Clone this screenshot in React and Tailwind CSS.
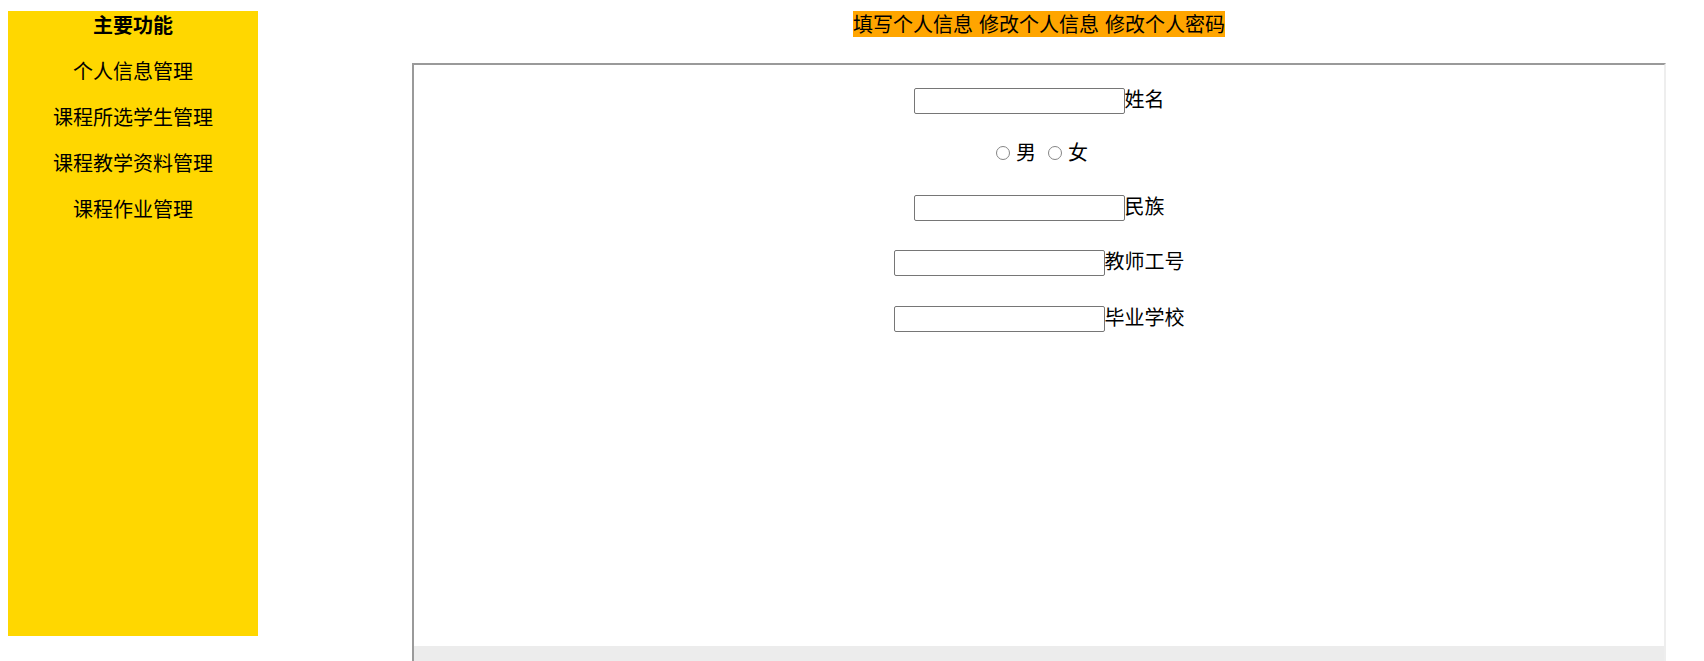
import React from 'react';

const menuItems = ['个人信息管理', '课程所选学生管理', '课程教学资料管理', '课程作业管理'];

const navItems = ['填写个人信息', '修改个人信息', '修改个人密码'];

const TextField = ({ label }) => (
  <div className="flex h-[26px] items-center">
    <input
      type="text"
      className="h-[26px] w-[211px] rounded-[2px] border border-[#767676] bg-white outline-none"
    />
    <span className="relative top-[-2px] text-[20px] leading-[26px] text-black">{label}</span>
  </div>
);

const Radio = () => (
  <span className="inline-block h-[14px] w-[14px] shrink-0 rounded-full border-[1.5px] border-[#858585] bg-white" />
);

const App = () => {
  return (
    <div className="flex h-[661px] items-start overflow-hidden bg-white font-['Noto_Sans_CJK_SC','Noto_Sans',sans-serif] text-black">
      {/* left menu */}
      <div className="ml-[8px] mt-[11px] h-[625px] w-[250px] shrink-0 bg-[#FFD700] pt-[1px] text-center">
        <div className="text-[20px] font-bold leading-[26px]">主要功能</div>
        {menuItems.map((item) => (
          <div key={item} className="mt-[20px] text-[20px] leading-[26px]">
            {item}
          </div>
        ))}
      </div>

      {/* right side */}
      <div className="ml-[154px] flex w-[1254px] shrink-0 flex-col items-center pt-[11px]">
        <div className="inline-flex h-[26px] gap-[6px] bg-[#FFA500] text-[20px] leading-[26px]">
          {navItems.map((item) => (
            <span key={item}>{item}</span>
          ))}
        </div>

        <div className="mt-[26px] flex h-[640px] w-full flex-col border-2 border-t-[#9a9a9a] border-l-[#9a9a9a] border-r-[#eeeeee] border-b-[#eeeeee]">
          <div className="flex h-[581px] shrink-0 flex-col items-center pt-[23px]">
            <TextField label="姓名" />

            <div className="mt-[26px] flex h-[26px] items-center pl-[6px] text-[20px] leading-[26px]">
              <Radio />
              <span className="relative top-[-1px] ml-[6px]">男</span>
              <span className="ml-[12px] flex items-center">
                <Radio />
              </span>
              <span className="relative top-[-1px] ml-[6px]">女</span>
            </div>

            <div className="mt-[29px]">
              <TextField label="民族" />
            </div>
            <div className="mt-[29px]">
              <TextField label="教师工号" />
            </div>
            <div className="mt-[30px]">
              <TextField label="毕业学校" />
            </div>
          </div>
          <div className="h-[40px] shrink-0 bg-[#ececec]" />
        </div>
      </div>
    </div>
  );
};

export default App;
